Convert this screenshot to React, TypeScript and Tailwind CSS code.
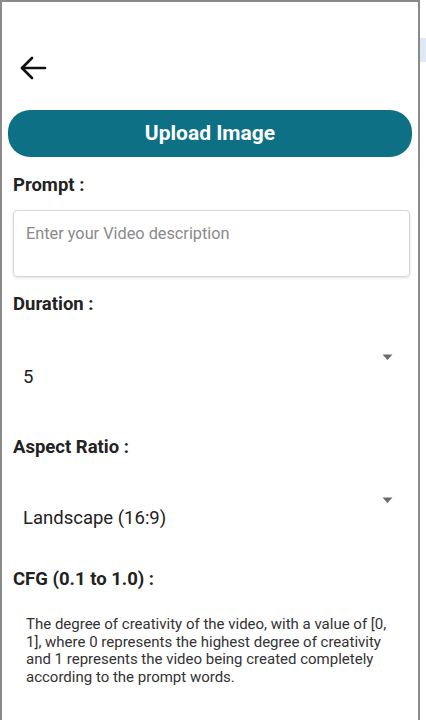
import React from 'react';

const Caret: React.FC = () => (
  <svg width="11" height="7" viewBox="0 0 11 7" className="shrink-0">
    <path d="M0.5 0.5 L10.5 0.5 L5.5 6 Z" fill="#6b6b6b" />
  </svg>
);

const App: React.FC = () => {
  return (
    <div className="w-[426px] h-[720px] bg-white flex overflow-hidden" style={{ fontFamily: 'Roboto, "Noto Sans", sans-serif' }}>
      {/* Phone frame */}
      <div className="w-[420px] h-full border-l-2 border-t-2 border-r-2 border-[#8a8a8a] flex flex-col">
        {/* Header */}
        <div className="h-[100px] pl-[17px] pt-[53px]">
          <svg width="28" height="26" viewBox="0 0 28 26" fill="none" stroke="#111" strokeWidth="2.6" strokeLinecap="round" strokeLinejoin="round">
            <path d="M26 13 H3" />
            <path d="M13 3 L3 13 L13 23" />
          </svg>
        </div>

        <div className="px-[6px] pt-[8px]">
          <button className="w-full h-[47px] rounded-[22px] bg-[#0d7084] text-white text-[21px] font-bold flex items-center justify-center">
            Upload Image
          </button>
        </div>

        <div className="px-[11px] flex flex-col">
          <div className="mt-[17px] text-[18.5px] font-bold text-[#222] leading-[22px]">Prompt :</div>
          <div className="mt-[14px] w-[397px] h-[67px] border border-[#d6d6d6] rounded-[4px] shadow-[0_1px_3px_rgba(0,0,0,0.12)] px-[12px] pt-[13px] text-[16.3px] text-[#8a8a8a] leading-[20px]">
            Enter your Video description
          </div>

          <div className="mt-[16px] text-[18.5px] font-bold text-[#222] leading-[22px]">Duration :</div>
          <div className="mt-[39px] flex justify-between pr-[14px] pl-[10px]">
            <span className="mt-[12px] text-[18.5px] text-[#222] leading-[22px]">5</span>
            <Caret />
          </div>

          <div className="mt-[48px] text-[18.5px] font-bold text-[#222] leading-[22px]">Aspect Ratio :</div>
          <div className="mt-[39px] flex justify-between pr-[14px] pl-[10px]">
            <span className="mt-[10px] text-[18.5px] text-[#222] leading-[22px]">Landscape (16:9)</span>
            <Caret />
          </div>

          <div className="mt-[39px] text-[18.5px] font-bold text-[#222] leading-[22px]">CFG (0.1 to 1.0) :</div>
          <p className="mt-[26px] pl-[13px] pr-[14px] text-[15px] text-[#333] leading-[17.5px]">
            The degree of creativity of the video, with a value of [0, 1], where 0 represents the highest degree of creativity and 1 represents the video being created completely according to the prompt words.
          </p>
        </div>
      </div>
      <div className="flex-1 bg-white flex flex-col">
        <div className="mt-[38px] h-[24px] bg-[#dfe8f3]" />
      </div>
    </div>
  );
};

export default App;
